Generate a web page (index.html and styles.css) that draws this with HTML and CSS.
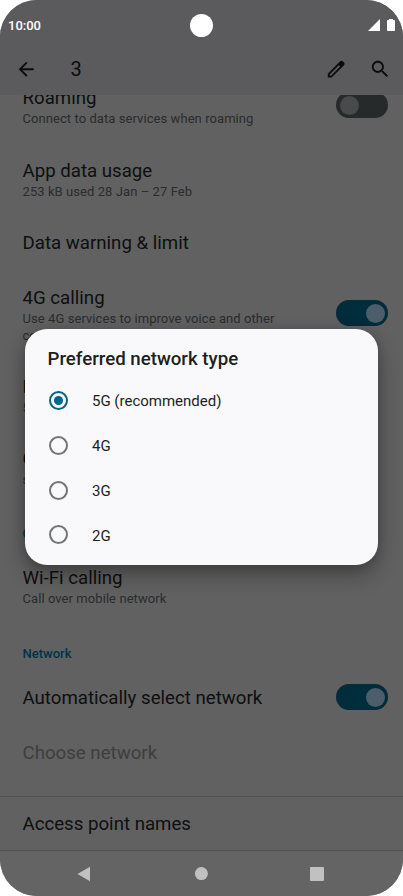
FILE: index.html
```html
<!DOCTYPE html>
<html lang="en">
<head>
<meta charset="utf-8">
<title>Mobile network</title>
<link rel="stylesheet" href="styles.css">
</head>
<body>
<div class="phone">
  <header class="top">
    <div class="status">
      <span class="time">10:00</span>
      <span class="camera"></span>
      <span class="indicators">
        <svg width="12" height="12" viewBox="0 0 12 12"><path d="M12 0V12H0Z" fill="#fff"/></svg>
        <svg width="8" height="12" viewBox="0 0 8 12"><path d="M2 0h4v1h1.2q.8 0 .8.8v9.4q0 .8-.8.8H.8Q0 12 0 11.200V1.800Q0 1 .8 1H2Z" fill="#fff"/></svg>
      </span>
    </div>
    <div class="appbar">
      <svg class="back" width="22.400" height="22.400" viewBox="0 0 24 24"><path d="M20 11H7.830l5.590-5.590L12 4l-8 8 8 8 1.410-1.410L7.830 13H20z"/></svg>
      <h1>3</h1>
      <svg class="edit" width="22.400" height="22.400" viewBox="0 0 24 24"><path fill-rule="evenodd" d="M20.410 4.940l-1.350-1.350c-.78-.78-2.050-.78-2.830 0L3 16.820V21h4.180L20.410 7.770c.79-.78.79-2.050 0-2.830zM6.410 19.060L5 19v-1.360l9.820-9.820 1.410 1.410z"/></svg>
      <svg class="search" width="22.400" height="22.400" viewBox="0 0 24 24"><path d="M15.500 14h-.79l-.28-.27C15.410 12.590 16 11.110 16 9.500 16 5.910 13.090 3 9.500 3S3 5.910 3 9.500 5.910 16 9.500 16c1.610 0 3.090-.59 4.230-1.570l.27.28v.79l5 4.990L20.490 19l-4.990-5zm-6 0C7.010 14 5 11.990 5 9.500S7.010 5 9.500 5 14 7.010 14 9.500 11.990 14 9.500 14z"/></svg>
    </div>
  </header>
  <main class="settings">
    <section class="row first">
      <div><h2>Roaming</h2><p>Connect to data services when roaming</p></div>
      <span class="switch"></span>
    </section>
    <section class="row"><div><h2>App data usage</h2><p>253 kB used 28 Jan – 27 Feb</p></div></section>
    <section class="row"><h2>Data warning &amp; limit</h2></section>
    <section class="row">
      <div><h2>4G calling</h2><p>Use 4G services to improve voice and other<br>communications (recommended)</p></div>
      <span class="switch on"></span>
    </section>
    <section class="row"><div><h2>Preferred network type</h2><p>5G (recommended)</p></div></section>
    <section class="row"><div><h2>Carrier settings version</h2><p>settings</p></div></section>
    <h3>Calling</h3>
    <section class="row"><div><h2>Wi-Fi calling</h2><p>Call over mobile network</p></div></section>
    <h3 class="network">Network</h3>
    <section class="row"><h2>Automatically select network</h2><span class="switch on"></span></section>
    <section class="row disabled"><h2>Choose network</h2></section>
    <section class="row access"><h2>Access point names</h2></section>
  </main>
  <nav class="navbar">
    <svg width="14" height="16" viewBox="0 0 14 16"><path d="M.5 8 13 .8V15.200Z"/></svg>
    <svg width="14" height="14" viewBox="0 0 14 14"><circle cx="7.400" cy="6.600" r="6.500"/></svg>
    <svg width="14" height="14" viewBox="0 0 14 14"><rect width="14" height="14" rx="1"/></svg>
  </nav>
  <div class="dialog" role="dialog">
    <h2>Preferred network type</h2>
    <div class="option"><span class="radio checked"></span>5G (recommended)</div>
    <div class="option"><span class="radio"></span>4G</div>
    <div class="option"><span class="radio"></span>3G</div>
    <div class="option"><span class="radio"></span>2G</div>
  </div>
</div>
</body>
</html>
```

FILE: styles.css
```css
* { box-sizing: border-box; }
body { margin: 0; background: #fff; font-family: Roboto, sans-serif; }
h1, h2, h3, p { margin: 0; font-weight: 400; }
svg { display: block; }

.phone {
  position: relative;
  display: flex;
  flex-direction: column;
  width: 403px;
  height: 896px;
  overflow: hidden;
  border-radius: 37px;
  background: #616161;
}

.top { height: 95px; background: #5b5b5d; }
.status {
  display: grid;
  grid-template-columns: 1fr 23px 1fr;
  align-items: center;
  height: 50px;
  padding: 0 8px;
  color: #fff;
}
.time { font-size: 13px; font-weight: 500; }
.camera { width: 23px; height: 23px; border-radius: 50%; background: #fff; }
.indicators { display: flex; justify-content: flex-end; gap: 7px; }
.appbar { display: flex; align-items: center; height: 38px; padding: 0 11.500px 0 15px; fill: #0c0c0d; }
.appbar h1 { flex: 1; margin-left: 33px; font-size: 20px; color: #0c0c0d; }
.edit { margin-right: 22px; }

.settings { flex: 1; min-height: 0; overflow: hidden; }
.row {
  display: flex;
  align-items: center;
  justify-content: space-between;
  padding: 15.500px 15px 15.500px 22.500px;
}
.first { margin-top: -24.500px; padding-bottom: 16.200px; }
.row h2 { font-size: 18.670px; line-height: 24px; color: #0e0f10; }
.row p { font-size: 13px; line-height: 17px; color: #2a2c2e; letter-spacing: .07px; }
.settings h3 {
  height: 47.300px;
  padding: 22.800px 22.500px 0;
  font-size: 13px;
  line-height: 16px;
  font-weight: 500;
  color: #003346;
}
.settings .network { height: 48.300px; padding-top: 23.800px; }
.row.disabled h2 { color: #3e3e3f; }
.access { height: 55px; margin-top: 15.500px; padding-top: 16px; border-top: 1px solid #525252; border-bottom: 1px solid #525252; }

.switch {
  display: flex;
  flex: none;
  width: 52px;
  height: 26px;
  margin-top: -2.500px;
  padding: 3.500px;
  border-radius: 13px;
  background: #262a2b;
}
.switch::before { content: ""; width: 19px; height: 19px; border-radius: 50%; background: #484a4b; }
.switch.on { justify-content: flex-end; background: #002c3b; }
.switch.on::before { background: #4c5e6b; }

.navbar {
  display: flex;
  align-items: center;
  justify-content: space-between;
  height: 44px;
  padding: 0 79px 0 77px;
  background: #646464;
  fill: #c1c1c1;
}

.dialog {
  position: absolute;
  top: 329px;
  left: 25px;
  width: 353px;
  height: 236px;
  padding: 17px 22.500px 0;
  border-radius: 22px;
  background: #f9f9fc;
  box-shadow: 0 10px 22px rgba(0, 0, 0, .3), 0 2px 12px rgba(0, 0, 0, .15);
}
.dialog h2 { height: 32.400px; font-size: 18.670px; line-height: 26px; font-weight: 500; color: #1d1f21; }
.option { display: flex; align-items: center; gap: 24px; height: 44.800px; padding-top: 1px; font-size: 15px; color: #1d1f21; }
.radio { display: flex; width: 19px; height: 19px; margin: -1.500px 0 0 1.500px; border: 2px solid #737476; border-radius: 50%; }
.radio.checked { border-color: #00658b; }
.radio.checked::before { content: ""; width: 9px; height: 9px; margin: auto; border-radius: 50%; background: #00658b; }
```
